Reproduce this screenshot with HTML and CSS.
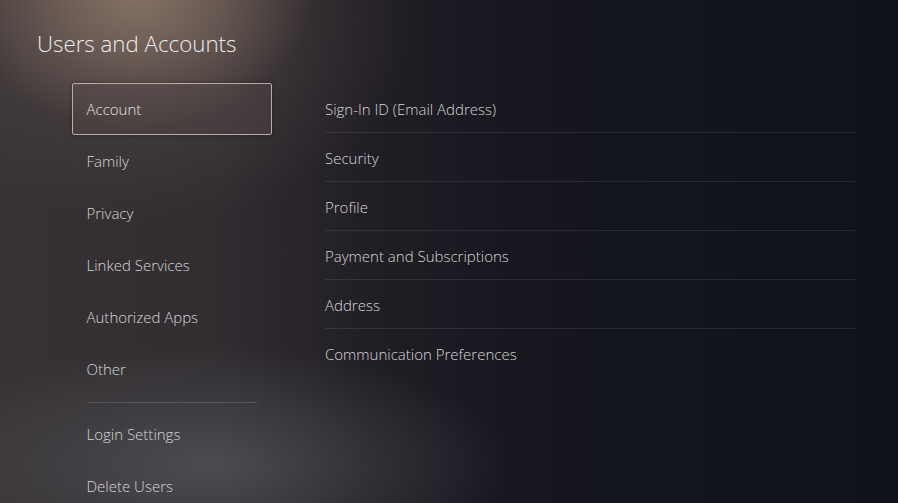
FILE: index.html
```html
<!DOCTYPE html>
<html lang="en">
<head>
<meta charset="utf-8">
<title>Users and Accounts</title>
<link rel="stylesheet" href="styles.css">
</head>
<body>
<div class="screen">
  <header class="header">
    <h1 class="title">Users and Accounts</h1>
  </header>
  <main class="content">
    <nav class="nav">
      <div class="nav-item is-focused">Account</div>
      <div class="nav-item">Family</div>
      <div class="nav-item">Privacy</div>
      <div class="nav-item">Linked Services</div>
      <div class="nav-item">Authorized Apps</div>
      <div class="nav-item">Other</div>
      <div class="nav-divider"></div>
      <div class="nav-item">Login Settings</div>
      <div class="nav-item">Delete Users</div>
    </nav>
    <section class="panel">
      <div class="row">Sign-In ID (Email Address)</div>
      <div class="row">Security</div>
      <div class="row">Profile</div>
      <div class="row">Payment and Subscriptions</div>
      <div class="row">Address</div>
      <div class="row no-line">Communication Preferences</div>
    </section>
  </main>
</div>
</body>
</html>
```
FILE: styles.css
```css
html, body {
  margin: 0;
  padding: 0;
  background: #12141d;
}
.screen {
  width: 898px;
  height: 503px;
  overflow: hidden;
  font-family: "Open Sans", "Noto Sans", sans-serif;
  color: #d9d9d9;
  background:
    radial-gradient(ellipse 180px 140px at 135px -10px, rgba(160,135,118,0.7), rgba(160,135,118,0) 100%),
    radial-gradient(ellipse 270px 200px at 150px 20px, rgba(120,100,92,0.4), rgba(120,100,92,0) 100%),
    radial-gradient(ellipse 300px 120px at 210px 465px, rgba(92,95,102,0.6), rgba(92,95,102,0) 100%),
    linear-gradient(90deg, #373234 0%, #302c30 25%, #221f26 40%, #15161e 60%, #10121b 100%);
}
.header {
  padding: 27px 0 0 37px;
  height: 55px;
  box-sizing: border-box;
}
.title {
  margin: 0;
  font-size: 22.3px;
  font-weight: 300;
  line-height: 34px;
  color: #ececec;
}
.content {
  display: flex;
  padding-top: 28px;
}
.nav {
  width: 200px;
  margin-left: 72px;
  display: flex;
  flex-direction: column;
}
.nav-item {
  height: 52px;
  box-sizing: border-box;
  padding-left: 13.5px;
  display: flex;
  align-items: center;
  font-size: 15px;
  font-weight: 300;
  color: #d6d6d6;
  border: 1.5px solid transparent;
  border-radius: 2px;
}
.nav-item.is-focused {
  border-color: #b7aca8;
  background: rgba(90,78,76,0.35);
  box-shadow: 0 0 4px rgba(0,0,0,0.35);
  color: #e2e2e2;
}
.nav-divider {
  height: 1px;
  margin: 7px 15px 5px 15px;
  background: rgba(255,255,255,0.14);
}
.panel {
  margin-left: 53px;
  width: 530px;
  display: flex;
  flex-direction: column;
  padding-top: 1px;
}
.row {
  height: 49px;
  box-sizing: border-box;
  display: flex;
  align-items: center;
  font-size: 15px;
  font-weight: 300;
  color: #d6d6d6;
  border-bottom: 1px solid rgba(255,255,255,0.09);
  padding-top: 1px;
}
.row.no-line {
  border-bottom: none;
}
```
